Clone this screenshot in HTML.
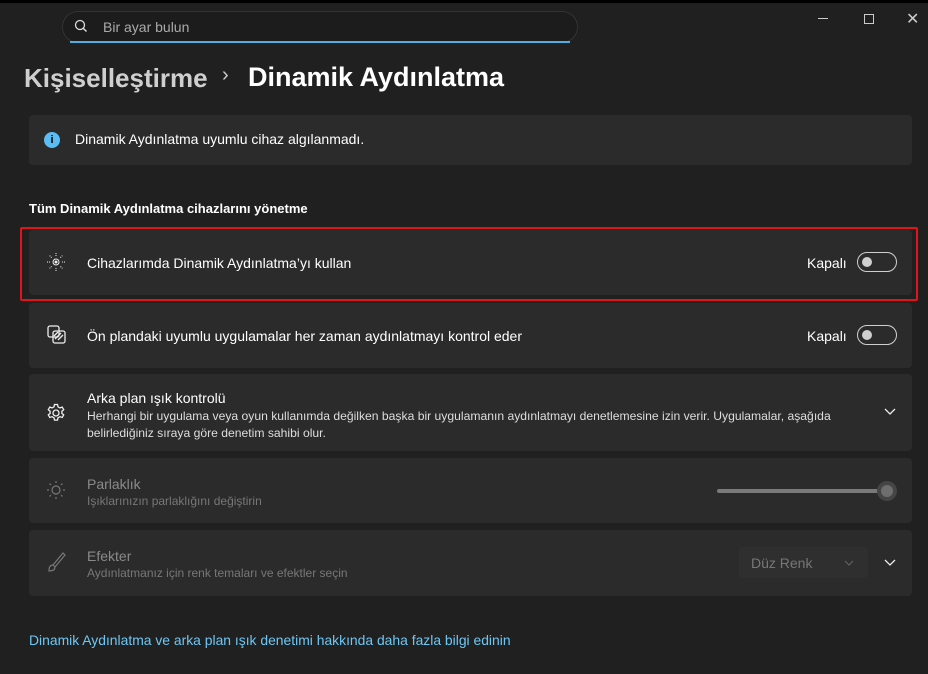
<!DOCTYPE html><html><head><meta charset="utf-8"><style>
body{margin:0;width:928px;height:674px;background:#202020;font-family:"Liberation Sans",sans-serif;color:#fff;position:relative;overflow:hidden}
.a{position:absolute}
.card{position:absolute;left:29px;width:883px;background:#2b2b2b;border-radius:4px}
.t{position:absolute;left:58px;font-size:14px;color:#fff}
.s{position:absolute;left:58px;font-size:12px;color:#cfcfcf}
.tog{position:absolute;left:828px;width:38px;height:18px;border:1px solid #cfcfcf;border-radius:11px}
.tog:after{content:"";position:absolute;left:4px;top:4px;width:10px;height:10px;border-radius:50%;background:#cfcfcf}
.kap{position:absolute;left:778px;font-size:14px}
.ic{position:absolute;left:17px}
</style></head><body>
<div class="a" style="left:0;top:0;width:928px;height:3px;background:#000"></div>
<div class="a" style="left:62px;top:11px;width:514px;height:30px;border:1px solid #333;border-radius:16px;background:#1c1c1c"></div>
<div class="a" style="left:70px;top:41px;width:500px;height:2px;background:#4cb0e6"></div>
<svg class="a" style="left:74px;top:19px" width="14" height="14" viewBox="0 0 14 14"><circle cx="6" cy="6" r="4.5" fill="none" stroke="#ddd" stroke-width="1.3"/><path d="M9.2 9.2L12.5 12.5" stroke="#ddd" stroke-width="1.4"/></svg>
<div class="a" style="left:103px;top:19px;font-size:14px;color:#aaa">Bir ayar bulun</div>
<div class="a" style="left:818px;top:18px;width:10px;height:1px;background:#ccc"></div>
<div class="a" style="left:864px;top:14px;width:8px;height:8px;border:1px solid #ccc"></div>
<div class="a" style="left:906px;top:9px;font-size:16px;color:#ccc">✕</div>
<div class="a" style="left:24px;top:63px;font-size:26px;font-weight:bold;color:#cfcfcf">Kişiselleştirme</div>
<div class="a" style="left:222px;top:64px;font-size:20px;color:#ccc">›</div>
<div class="a" style="left:248px;top:62px;font-size:27px;font-weight:bold;">Dinamik Aydınlatma</div>
<div class="card" style="top:115px;height:50px"><div class="a" style="left:15px;top:17px;width:16px;height:16px;border-radius:50%;background:#5cbdf5;color:#000;font-size:11px;font-weight:bold;text-align:center;line-height:16px">i</div><div class="t" style="left:46px;top:16px">Dinamik Aydınlatma uyumlu cihaz algılanmadı.</div></div>
<div class="a" style="left:29px;top:201px;font-size:13px;font-weight:bold">Tüm Dinamik Aydınlatma cihazlarını yönetme</div>
<div class="card" style="top:230px;height:65px"><svg class="ic" style="top:22px" width="20" height="20" viewBox="0 0 20 20" stroke="#eee" fill="none"><circle cx="10" cy="10" r="3"/><circle cx="10" cy="10" r="1" fill="#eee"/><path d="M10 1v3M10 16v3M1 10h3M16 10h3M3.6 3.6l2 2M14.4 14.4l2 2M3.6 16.4l2-2M14.4 5.6l2-2" stroke-dasharray="1 1"/></svg><div class="t" style="top:25px">Cihazlarımda Dinamik Aydınlatma’yı kullan</div><div class="kap" style="top:25px">Kapalı</div><div class="tog" style="top:22px"></div></div>
<div class="a" style="left:20px;top:227px;width:894px;height:70px;border:2px solid #e0141a;border-radius:2px"></div>
<div class="card" style="top:303px;height:65px"><svg class="ic" style="top:21px" width="22" height="22" viewBox="0 0 22 22" stroke="#eee" fill="none" stroke-width="1.3"><rect x="2" y="2" width="11" height="11" rx="2"/><rect x="7" y="7" width="12" height="12" rx="2"/><path d="M8 12l4-4M9 15l6-6M12 16l5-5"/></svg><div class="t" style="top:25px">Ön plandaki uyumlu uygulamalar her zaman aydınlatmayı kontrol eder</div><div class="kap" style="top:25px">Kapalı</div><div class="tog" style="top:22px"></div></div>
<div class="card" style="top:374px;height:77px"><svg class="ic" style="top:29px" width="20" height="20" viewBox="0 0 20 20" fill="none" stroke="#eee" stroke-width="1.3"><circle cx="10" cy="10" r="3"/><path d="M8.5 1.5h3l.5 2.3 2 1.1 2.2-.8 1.5 2.6-1.8 1.5v2.2l1.8 1.5-1.5 2.6-2.2-.8-2 1.1-.5 2.3h-3l-.5-2.3-2-1.1-2.2.8-1.5-2.6 1.8-1.5V8.2L2.3 6.7l1.5-2.6 2.2.8 2-1.1z"/></svg><div class="t" style="top:16px">Arka plan ışık kontrolü</div><div class="s" style="top:34px;line-height:17px;color:#ddd;font-size:12.15px">Herhangi bir uygulama veya oyun kullanımda değilken başka bir uygulamanın aydınlatmayı denetlemesine izin verir. Uygulamalar, aşağıda<br>belirlediğiniz sıraya göre denetim sahibi olur.</div><svg class="a" style="left:855px;top:34px" width="12" height="8"><path d="M1 1l5 5 5-5" stroke="#eee" fill="none" stroke-width="1.3"/></svg></div>
<div class="card" style="top:458px;height:65px"><svg class="ic" style="top:22px" width="20" height="20" viewBox="0 0 20 20" fill="none" stroke="#777" stroke-width="1.2"><circle cx="10" cy="10" r="4"/><path d="M10 1v2M10 17v2M1 10h2M17 10h2M3.6 3.6l1.4 1.4M15 15l1.4 1.4M3.6 16.4L5 15M15 5l1.4-1.4"/></svg><div class="t" style="top:18px;color:#8a8a8a">Parlaklık</div><div class="s" style="top:36px;color:#777">Işıklarınızın parlaklığını değiştirin</div><div class="a" style="left:688px;top:31px;width:170px;height:4px;border-radius:2px;background:#7a7a7a"></div><div class="a" style="left:848px;top:23px;width:20px;height:20px;border-radius:50%;background:#454545"></div><div class="a" style="left:852px;top:27px;width:12px;height:12px;border-radius:50%;background:#6e6e6e"></div></div>
<div class="card" style="top:530px;height:66px"><svg class="ic" style="top:21px" width="20" height="22" viewBox="0 0 20 22" fill="none" stroke="#777" stroke-width="1.2"><path d="M17 2L7 14l2 2L19 4zM7 14c-3 0-4 2-4 6 3 0 6-1 6-4"/></svg><div class="t" style="top:18px;color:#8a8a8a">Efekter</div><div class="s" style="top:36px;color:#777">Aydınlatmanız için renk temaları ve efektler seçin</div><div class="a" style="left:710px;top:17px;width:129px;height:31px;border-radius:4px;background:#2f2f2f"></div><div class="a" style="left:722px;top:25px;font-size:14px;color:#777">Düz Renk</div><svg class="a" style="left:815px;top:30px" width="10" height="6"><path d="M1 1l4 4 4-4" stroke="#666" fill="none"/></svg><svg class="a" style="left:855px;top:29px" width="12" height="8"><path d="M1 1l5 5 5-5" stroke="#eee" fill="none" stroke-width="1.3"/></svg></div>
<div class="a" style="left:29px;top:632px;font-size:13.9px;color:#6cc7f5">Dinamik Aydınlatma ve arka plan ışık denetimi hakkında daha fazla bilgi edinin</div>
</body></html>
